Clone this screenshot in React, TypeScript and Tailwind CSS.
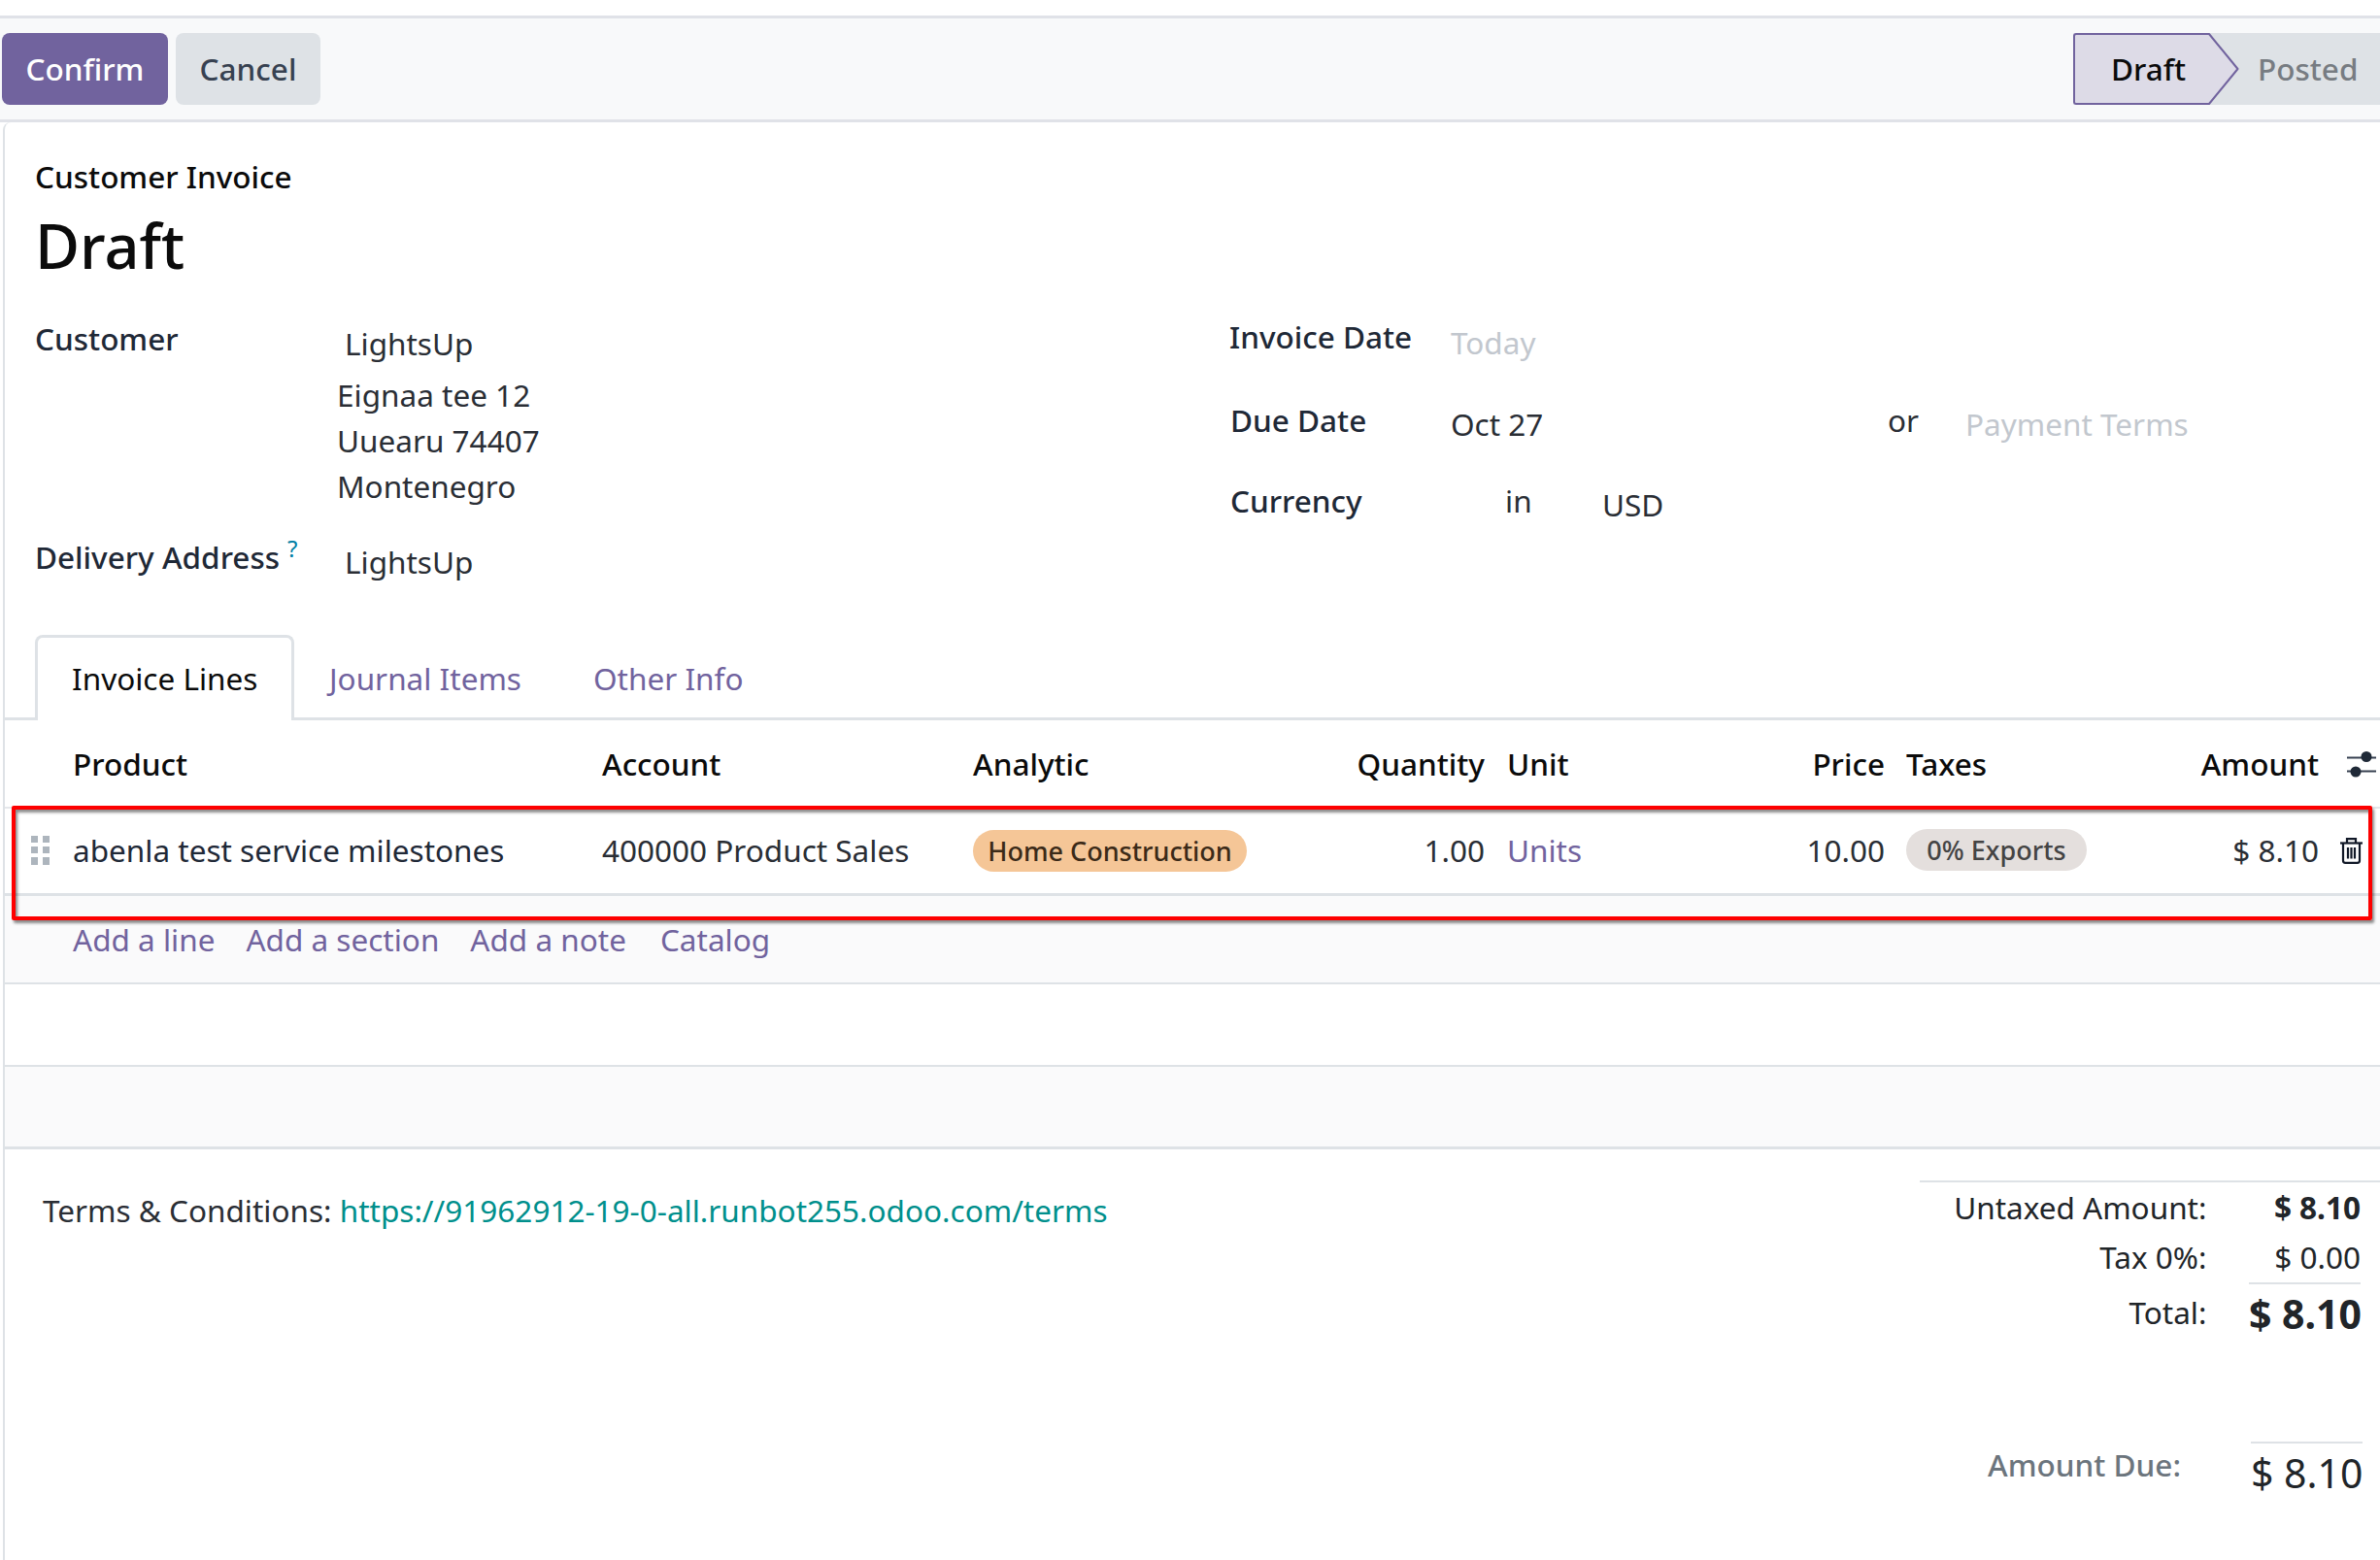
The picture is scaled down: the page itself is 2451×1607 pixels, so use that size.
import React from "react";

const purple = "text-[#71639e]";

function Drag() {
  return (
    <svg width="20" height="30" viewBox="0 0 20 30" className="fill-[#adb5bd]">
      <rect x="0" y="0" width="7" height="7" /><rect x="12" y="0" width="7" height="7" />
      <rect x="0" y="11" width="7" height="7" /><rect x="12" y="11" width="7" height="7" />
      <rect x="0" y="22" width="7" height="8" /><rect x="12" y="22" width="7" height="8" />
    </svg>
  );
}

function Sliders() {
  return (
    <svg width="32" height="28" viewBox="0 0 32 28" className="shrink-0">
      <path d="M1 7.5H31M1 21.5H31" stroke="#374151" strokeWidth="2" />
      <circle cx="21" cy="6.5" r="5.5" fill="#1f2937" />
      <circle cx="10" cy="22" r="5.5" fill="#1f2937" />
    </svg>
  );
}

function Trash() {
  return (
    <svg width="25" height="28" viewBox="0 0 25 28" fill="none" stroke="#111827" strokeWidth="2.2">
      <path d="M1 6.5H24" />
      <path d="M8 6V2.2H17V6" />
      <path d="M4 6.5V24.5Q4 26.8 6.3 26.8H18.7Q21 26.8 21 24.5V6.5" />
      <path d="M9 11V22.5M12.5 11V22.5M16 11V22.5" />
    </svg>
  );
}

function Chevron() {
  return (
    <svg width="32" height="74" viewBox="0 0 32 74" className="absolute left-full -top-[2px]">
      <path d="M0 0H1L31 37L1 74H0Z" fill="#dddbe7" />
      <path d="M0 1H1L30.5 37L1 73H0" fill="none" stroke="#71639e" strokeWidth="2" strokeLinejoin="round" />
    </svg>
  );
}

function Field({ label, className = "", children }: { label: React.ReactNode; className?: string; children?: React.ReactNode }) {
  return (
    <div className={`flex ${className}`}>
      <div className="w-[228px] shrink-0 whitespace-nowrap font-medium text-[#1f2937]">{label}</div>
      {children}
    </div>
  );
}

export default function App() {
  return (
    <div className="w-[2451px] h-[1607px] overflow-hidden bg-white relative text-[31.5px] leading-[44px] text-[#2a2e35] font-['Noto_Sans',sans-serif]">
      <div className="h-[16px]" />
      {/* control panel */}
      <div className="h-[110px] bg-[#f8f9fa] border-y-[3px] border-[#e0e2e8] flex items-center justify-between pl-[2px]">
        <div className="flex gap-2">
          <button className="w-[171px] h-[74px] rounded-lg bg-[#71639e] text-white font-medium">Confirm</button>
          <button className="w-[149px] h-[74px] rounded-lg bg-[#dee2e6] text-[#374151] font-medium">Cancel</button>
        </div>
        <div className="flex h-[74px] items-center">
          <div className="relative w-[139px] h-[74px] bg-[#dddbe7] border-y-2 border-l-2 border-[#71639e] rounded-l-[3px] flex items-center pl-[37px] text-[#0b0b0b] font-medium">
            Draft
            <Chevron />
          </div>
          <div className="w-[177px] h-[74px] bg-[#dee2e6] text-[#777c82] font-medium flex items-center pl-[51px]">Posted</div>
        </div>
      </div>

      {/* sheet */}
      <div className="ml-[3px] border-l-[2px] border-[#dee2e6] h-[1481px] rounded-tl-lg">
        <div className="pl-[31px] pt-[34px]">
          <div className="font-medium text-[#0b0b0b] leading-[44px]">Customer Invoice</div>
          <div className="text-[63px] leading-[86px] font-medium text-[#0b0b0b] mt-[6px]">Draft</div>

          <div className="flex mt-[31px]">
            {/* left group */}
            <div className="w-[1230px] shrink-0">
              <Field label="Customer" className="h-[44px]">
                <div className="pl-[91px] pt-[5px]">LightsUp</div>
              </Field>
              <div className="pl-[311px] mt-[14px]">
                <div className="h-[47px]">Eignaa tee 12</div>
                <div className="h-[47px]">Uuearu 74407</div>
                <div className="h-[47px]">Montenegro</div>
              </div>
              <Field label={<span>Delivery Address<sup className="text-[24px] text-[#0180a5] ml-[8px] font-normal top-0 align-[12px]">?</sup></span>} className="mt-[26px]">
                <div className="pl-[91px] pt-[5px]">LightsUp</div>
              </Field>
            </div>
            {/* right group */}
            <div className="flex-1 -mt-[2px]">
              <div className="flex h-[84px]">
                <div className="w-[228px] font-medium text-[#1f2937]">Invoice Date</div>
                <div className="pt-[6px] text-[#c2c7ce]">Today</div>
              </div>
              <div className="flex h-[83px] pl-[1px]">
                <div className="w-[227px] pt-[2px] font-medium text-[#1f2937]">Due Date</div>
                <div className="w-[450px] pt-[6px]">Oct 27</div>
                <div className="w-[80px] pt-[2px]">or</div>
                <div className="pt-[6px] text-[#c2c7ce]">Payment Terms</div>
              </div>
              <div className="flex pl-[1px]">
                <div className="w-[283px] pt-[2px] font-medium text-[#1f2937]">Currency</div>
                <div className="w-[100px] pt-[2px]">in</div>
                <div className="pt-[6px]">USD</div>
              </div>
            </div>
          </div>
        </div>

        {/* tabs */}
        <div className="mt-[53px] h-[88px] pl-[31px] border-b-[3px] border-[#dee2e6] flex text-[#71639e]">
          <div className="w-[267px] h-[88px] bg-white border-x-[3px] border-t-[3px] border-[#dee2e6] rounded-t-lg text-[#0b0b0b] pl-[35px] pt-[20px]">Invoice Lines</div>
          <div className="pl-[36px] pt-[23px] w-[308px] shrink-0">Journal Items</div>
          <div className="pt-[23px]">Other Info</div>
        </div>

        {/* list */}
        <div className="grid grid-cols-[615px_382px_290px_237px_148px_264px_447px_auto] h-[91px] items-center font-medium text-[#0b0b0b] border-b-[2px] border-[#e5e7eb]">
          <div className="pl-[70px]">Product</div>
          <div>Account</div>
          <div>Analytic</div>
          <div className="text-right whitespace-nowrap">Quantity</div>
          <div className="pl-[23px]">Unit</div>
          <div className="text-right">Price</div>
          <div className="pl-[22px] flex justify-between"><span>Taxes</span><span>Amount</span></div>
          <div className="pl-[28px]"><Sliders /></div>
        </div>
        <div className="grid grid-cols-[615px_382px_290px_237px_148px_264px_447px_auto] h-[90px] pb-[2px] items-center border-b-[3px] border-[#dee2e6]">
          <div className="flex items-center pl-[27px]">
            <div className="w-[43px]"><Drag /></div>
            <span className="whitespace-nowrap text-[#1f2937]">abenla test service milestones</span>
          </div>
          <div className="whitespace-nowrap">400000 Product Sales</div>
          <div>
            <span className="inline-flex items-center h-[43px] w-[282px] justify-center rounded-full bg-[#f5c697] text-[#3b2a18] text-[27px] font-medium whitespace-nowrap">Home Construction</span>
          </div>
          <div className="text-right">1.00</div>
          <div className={`pl-[23px] ${purple}`}>Units</div>
          <div className="text-right">10.00</div>
          <div className="pl-[22px] flex justify-between items-center">
            <span className="inline-flex items-center h-[43px] w-[186px] justify-center rounded-full bg-[#e4dfdd] text-[#444] text-[27px] font-medium whitespace-nowrap">0% Exports</span>
            <span>$ 8.10</span>
          </div>
          <div className="pl-[21px]"><Trash /></div>
        </div>
        <div className="h-[91px] bg-[#fafafb] border-b-[2px] border-[#dee2e6] flex gap-[32px] pl-[70px] pt-[23px] text-[#71639e]">
          <span>Add a line</span><span>Add a section</span><span>Add a note</span><span className="ml-[3px]">Catalog</span>
        </div>
        <div className="h-[85px] border-b-[2px] border-[#dee2e6]" />
        <div className="h-[85px] bg-[#fafafb] border-b-[3px] border-[#dee2e6]" />

        {/* footer */}
        <div className="flex justify-between">
          <div className="pl-[39px] pt-[41px]">Terms &amp; Conditions: <span className="text-[#008f8c]">https://91962912-19-0-all.runbot255.odoo.com/terms</span></div>
          <div className="w-[474px] mt-[32px] text-[#212529]">
            <div className="border-t-[2px] border-[#dee2e6] h-[53px] flex justify-end pr-[20px] items-center">
              <span className="w-[300px] text-right">Untaxed Amount:</span>
              <span className="w-[161px] text-right font-bold">$ 8.10</span>
            </div>
            <div className="h-[52px] flex justify-end pr-[20px] items-center">
              <span className="w-[300px] text-right">Tax 0%:</span>
              <span className="w-[161px] text-right">$ 0.00</span>
            </div>
            <div className="h-[62px] flex justify-end pr-[20px] items-center">
              <span className="w-[300px] text-right">Total:</span>
              <div className="w-[161px] flex justify-end">
                <span className="w-[115px] border-t-[2px] border-[#dee2e6] h-[62px] text-right font-bold text-[41px] leading-[60px] whitespace-nowrap">$ 8.10</span>
              </div>
            </div>
            <div className="mt-[102px] flex justify-end pr-[18px]">
              <span className="text-[#6c757d] font-medium pr-[72px] pt-[2px] whitespace-nowrap">Amount Due:</span>
              <span className="w-[115px] border-t-[2px] border-[#dee2e6] text-right text-[41px] leading-[61px] whitespace-nowrap">$ 8.10</span>
            </div>
          </div>
        </div>
      </div>

      {/* annotation box */}
      <div className="absolute left-[12px] top-[830px] w-[2431px] h-[118px] border-[4px] border-[#fe0000] rounded-[2px] shadow-[2px_3px_3px_rgba(0,0,0,0.45),inset_2px_3px_3px_rgba(0,0,0,0.45)] pointer-events-none" />
    </div>
  );
}
